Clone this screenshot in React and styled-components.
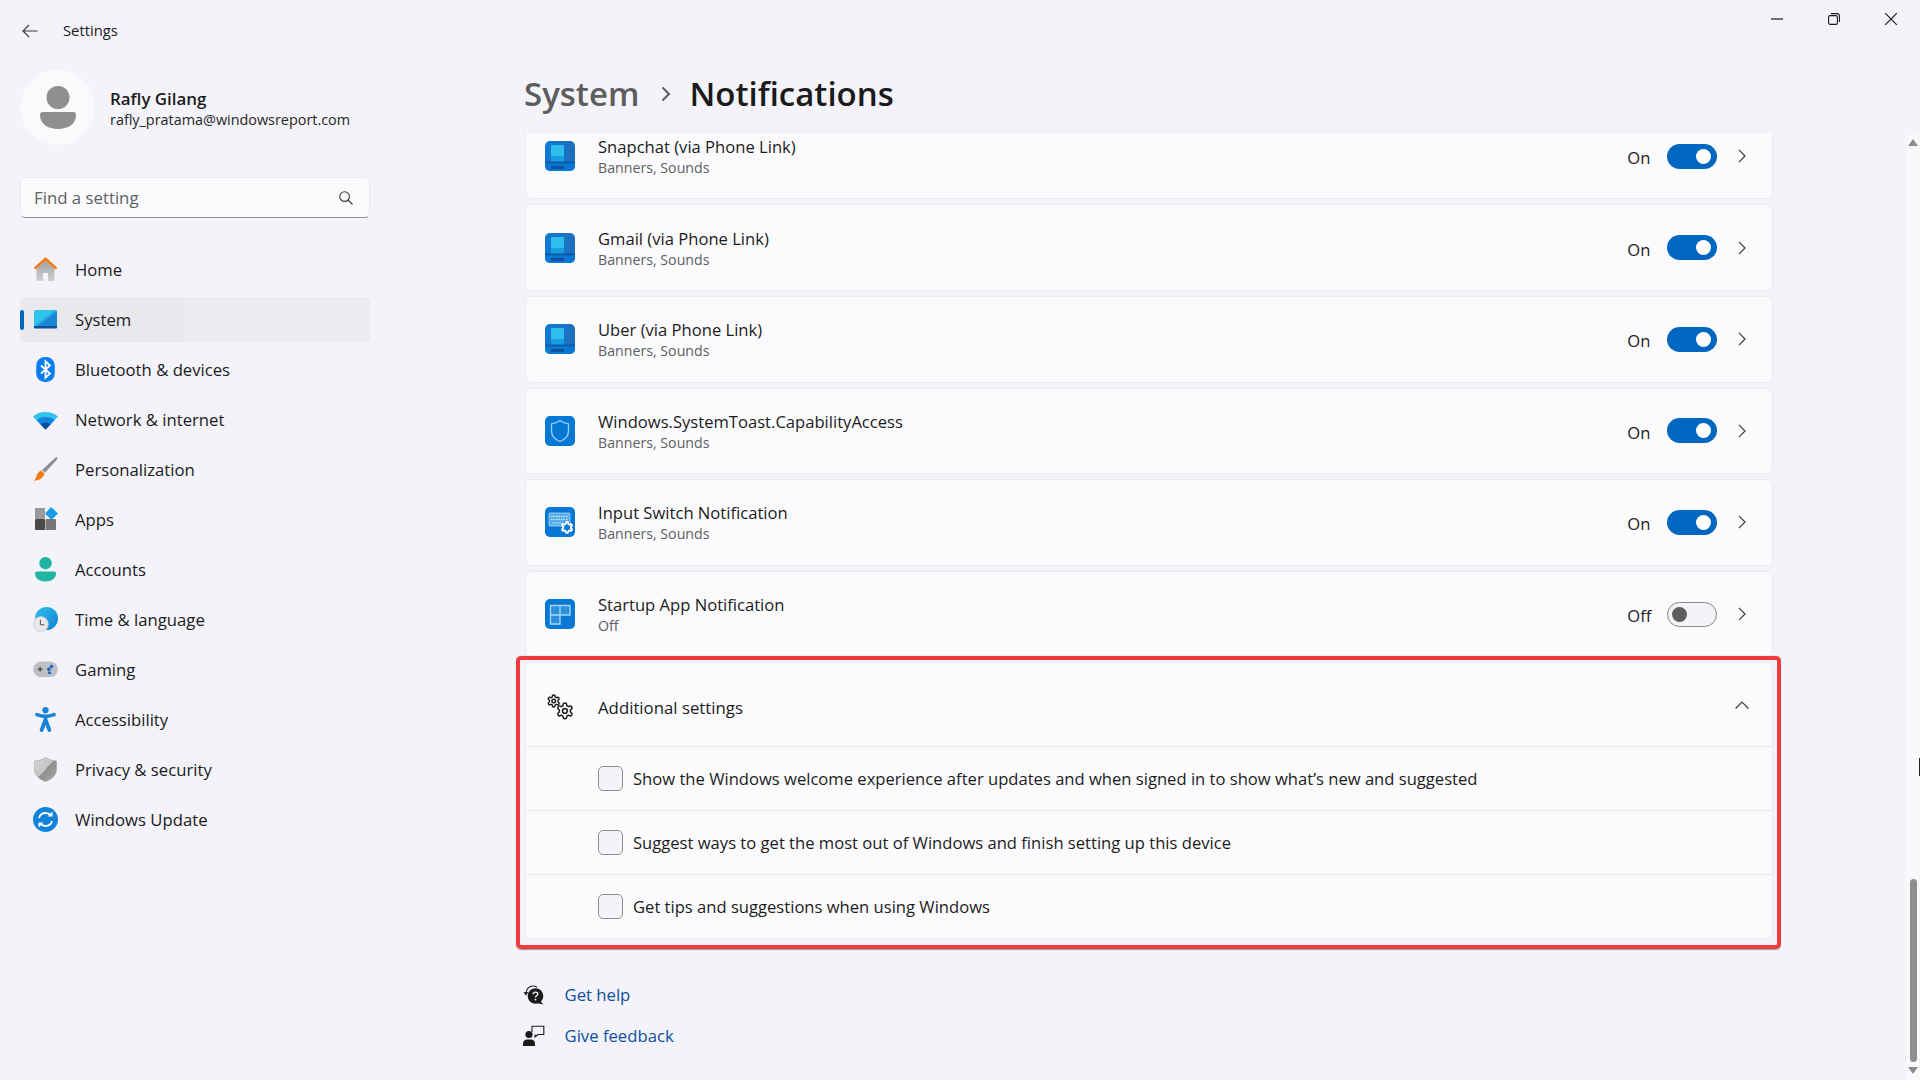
import React from "react";
import styled, { createGlobalStyle } from "styled-components";

const Global = createGlobalStyle`
    html, body {
        margin: 0;
        padding: 0;
        background: #f3f3f9;
    }
    * {
        box-sizing: border-box;
    }
`;

const Page = styled.div`
    width: 1920px;
    height: 1080px;
    overflow: hidden;
    position: relative;
    display: flex;
    flex-direction: column;
    background: #f3f3f9;
    color: #1b1b1b;
    font-family: "Open Sans", "Noto Sans", sans-serif;
    font-size: 16.6px;
`;

const TitleBar = styled.div`
    height: 62px;
    flex: none;
    display: flex;
    align-items: center;
    padding-left: 22px;
`;

const TitleText = styled.div`
    margin-left: 25px;
    padding-bottom: 2px;
    font-size: 14.8px;
`;

const WindowButtons = styled.div`
    margin-left: auto;
    display: flex;
    align-items: flex-start;
    align-self: flex-start;
    padding-top: 13px;
    padding-right: 23px;
    gap: 45px;
`;

const Body = styled.div`
    flex: 1;
    display: flex;
    min-height: 0;
`;

const Sidebar = styled.div`
    width: 505px;
    flex: none;
    padding-left: 20px;
    padding-top: 8px;
`;

const Profile = styled.div`
    display: flex;
    align-items: center;
    gap: 15px;
    height: 75px;
`;

const Avatar = styled.div`
    width: 75px;
    height: 75px;
    border-radius: 50%;
    background: #fafafd;
    display: flex;
    align-items: center;
    justify-content: center;
`;

const ProfileName = styled.div`
    font-weight: 600;
    font-size: 16.9px;
    line-height: 22px;
    margin-top: 2px;
`;

const ProfileMail = styled.div`
    font-size: 14.4px;
    line-height: 20px;
    color: #262626;
`;

const SearchBox = styled.div`
    margin-top: 32px;
    width: 350px;
    height: 41px;
    border-radius: 5px;
    background: #fbfbfe;
    border: 1px solid #ebebf0;
    border-bottom: 1px solid #8d8d8d;
    display: flex;
    align-items: center;
    justify-content: space-between;
    padding: 0 16px 0 13px;
    color: #606060;
    font-size: 16.8px;
`;

const Nav = styled.div`
    margin-top: 29px;
    width: 350px;
    display: flex;
    flex-direction: column;
    gap: 5px;
    font-size: 16.7px;
`;

const NavItem = styled.div`
    height: 45px;
    border-radius: 5px;
    display: flex;
    align-items: center;
    gap: 17px;
    padding-left: 13px;
    position: relative;
    background: ${(p) => (p.$active ? "linear-gradient(90deg, #e8e8ed 45%, #ebebf0 48%)" : "transparent")};
    &::before {
        content: "";
        display: ${(p) => (p.$active ? "block" : "none")};
        position: absolute;
        left: 0;
        top: 13px;
        width: 4px;
        height: 20px;
        border-radius: 2px;
        background: #0067c0;
    }
`;

const NavIcon = styled.svg`
    width: 25px;
    height: 25px;
    flex: none;
`;

const Main = styled.div`
    width: 1288px;
    flex: none;
    display: flex;
    flex-direction: column;
    min-height: 0;
`;

const Breadcrumb = styled.div`
    height: 71px;
    flex: none;
    padding-left: 19px;
    padding-bottom: 8px;
    display: flex;
    align-items: center;
    font-size: 33px;
    font-weight: 600;
`;

const Crumb = styled.span`
    color: ${(p) => (p.$muted ? "#5d5d5d" : "#1b1b1b")};
`;

const CrumbArrow = styled.svg`
    width: 10px;
    height: 16px;
    margin: 0 18px 0 22px;
`;

const Scroller = styled.div`
    flex: 1;
    min-height: 0;
    overflow: hidden;
    padding: 0 19.7px 0 19.5px;
`;

const Stack = styled.div`
    margin-top: -20.2px;
    display: flex;
    flex-direction: column;
    gap: 5px;
`;

const Card = styled.div`
    height: 86.6px;
    background: #fbfbfe;
    border: 1px solid #ebebf0;
    border-radius: 6px;
    display: flex;
    align-items: center;
    padding: 0 26px 0 19.5px;
`;

const AppIcon = styled.svg`
    width: 30px;
    height: 30px;
    flex: none;
`;

const CardText = styled.div`
    margin-left: 23px;
    flex: 1;
`;

const CardTitle = styled.div`
    line-height: 24px;
`;

const CardSub = styled.div`
    font-size: 14.2px;
    line-height: 18px;
    color: #5f5f5f;
`;

const StateLabel = styled.div`
    width: 40px;
    padding-top: 3px;
`;

const Toggle = styled.div`
    width: 50px;
    height: 25px;
    border-radius: 13px;
    position: relative;
    background: ${(p) => (p.$on ? "#0067c0" : "#f3f3f7")};
    border: ${(p) => (p.$on ? "none" : "1.5px solid #8a8a8a")};
    &::after {
        content: "";
        position: absolute;
        top: 50%;
        width: 15px;
        height: 15px;
        margin-top: -7.5px;
        border-radius: 50%;
        background: ${(p) => (p.$on ? "#ffffff" : "#5d5d5d")};
        ${(p) => (p.$on ? "right: 6.5px;" : "left: 3.5px;")}
    }
`;

const Chevron = styled.svg`
    width: 8px;
    height: 14px;
    margin-left: 21px;
    flex: none;
`;

const Expander = styled.div`
    position: relative;
    background: #fbfbfe;
    border: 1px solid #ebebf0;
    border-radius: 6px;
    &::after {
        content: "";
        position: absolute;
        inset: -7px -8.5px -11px -9.5px;
        border: 4.5px solid #ef3b40;
        border-radius: 5px;
        box-shadow: 0 0.5px 1px rgba(60, 60, 60, 0.5);
        pointer-events: none;
    }
`;

const ExpanderHead = styled.div`
    height: 84px;
    border-bottom: 1px solid #e8e8ec;
    display: flex;
    align-items: center;
    padding: 0 23px 0 19.5px;
`;

const HeadGroup = styled.div`
    display: flex;
    align-items: center;
    flex: 1;
    padding-top: 5px;
`;

const HeadLabel = styled.div`
    margin-left: 23px;
    font-size: 16.8px;
`;

const CheckRow = styled.div`
    height: 64px;
    display: flex;
    align-items: center;
    gap: 10.5px;
    padding-left: 72.5px;
    padding-bottom: 1px;
    border-bottom: 1px solid #e8e8ec;
    &:last-child {
        height: 63px;
        border-bottom: none;
    }
`;

const CheckBox = styled.div`
    width: 24.5px;
    height: 24.5px;
    border-radius: 5px;
    border: 1.5px solid #8e8e8e;
    background: #f4f4f8;
`;

const Links = styled.div`
    margin-top: 40.6px;
    margin-left: -2px;
    display: flex;
    flex-direction: column;
    gap: 11px;
`;

const LinkRow = styled.div`
    height: 30px;
    display: flex;
    align-items: center;
    gap: 20px;
    color: #0f4f9e;
    font-size: 16.7px;
`;

const ScrollTrack = styled.div`
    margin-top: 71px;
    margin-left: auto;
    width: 14px;
    background: #f9f9fc;
    border-radius: 7px 7px 0 0;
    display: flex;
    flex-direction: column;
    align-items: center;
    padding: 6px 0;
`;

const ScrollArrow = styled.div`
    width: 0;
    height: 0;
    border-left: 5.5px solid transparent;
    border-right: 5.5px solid transparent;
    ${(p) => (p.$down ? "border-top: 7px solid #8a8a8a;" : "border-bottom: 7px solid #8a8a8a;")}
`;

const ScrollThumb = styled.div`
    margin-top: auto;
    margin-bottom: 5px;
    width: 7px;
    height: 183px;
    border-radius: 4px;
    background: #8f8f8f;
`;

const CursorEdge = styled.div`
    position: absolute;
    right: 0;
    top: 758px;
    width: 1px;
    height: 18px;
    background: #222222;
`;

const gearPath =
    "M12.22 2h-.44a2 2 0 0 0-2 2v.18a2 2 0 0 1-1 1.73l-.43.25a2 2 0 0 1-2 0l-.15-.08a2 2 0 0 0-2.73.73l-.22.38a2 2 0 0 0 .73 2.73l.15.1a2 2 0 0 1 1 1.72v.51a2 2 0 0 1-1 1.74l-.15.09a2 2 0 0 0-.73 2.73l.22.38a2 2 0 0 0 2.73.73l.15-.08a2 2 0 0 1 2 0l.43.25a2 2 0 0 1 1 1.73V20a2 2 0 0 0 2 2h.44a2 2 0 0 0 2-2v-.18a2 2 0 0 1 1-1.73l.43-.25a2 2 0 0 1 2 0l.15.08a2 2 0 0 0 2.73-.73l.22-.39a2 2 0 0 0-.73-2.73l-.15-.08a2 2 0 0 1-1-1.74v-.5a2 2 0 0 1 1-1.74l.15-.09a2 2 0 0 0 .73-2.73l-.22-.38a2 2 0 0 0-2.73-.73l-.15.08a2 2 0 0 1-2 0l-.43-.25a2 2 0 0 1-1-1.73V4a2 2 0 0 0-2-2z";

const BackIcon = () => (
    <svg width="16" height="14" viewBox="0 0 16 14" fill="none" stroke="#3c3c3c" strokeWidth="1.2">
        <path d="M15.5 7H1M7 1 1 7l6 6" />
    </svg>
);

const MinIcon = () => (
    <svg width="12" height="12" viewBox="0 0 12 12" fill="none" stroke="#1b1b1b" strokeWidth="1.2">
        <path d="M0 6h12" />
    </svg>
);

const RestoreIcon = () => (
    <svg width="12" height="12" viewBox="0 0 12 12" fill="none" stroke="#1b1b1b" strokeWidth="1.1">
        <rect x="0.6" y="2.6" width="8.8" height="8.8" rx="1.5" />
        <path d="M3 .6h6.2a2.2 2.2 0 0 1 2.2 2.2V9" />
    </svg>
);

const CloseIcon = () => (
    <svg width="12" height="12" viewBox="0 0 12 12" fill="none" stroke="#1b1b1b" strokeWidth="1.2">
        <path d="M0 0l12 12M12 0 0 12" />
    </svg>
);

const SearchIcon = () => (
    <svg width="14" height="14" viewBox="0 0 14 14" fill="none" stroke="#3c3c3c" strokeWidth="1.1">
        <circle cx="5.6" cy="5.6" r="4.8" />
        <path d="M9 9l4.5 4.5" />
    </svg>
);

const RowChevron = () => (
    <Chevron viewBox="0 0 8 14" fill="none" stroke="#3c3c3c" strokeWidth="1.2">
        <path d="M1 .8 7 7l-6 6.2" />
    </Chevron>
);

const HomeIcon = () => (
    <NavIcon viewBox="0 0 25 25">
        <defs>
            <linearGradient id="homeG" x1="0" y1="0" x2="0" y2="1">
                <stop offset="0" stopColor="#9e9e9e" />
                <stop offset="1" stopColor="#d2d2d2" />
            </linearGradient>
        </defs>
        <path d="M12.5 3.5 3.5 11.5V23a1 1 0 0 0 1 1h5.5v-8h5v8h5.5a1 1 0 0 0 1-1V11.5z" fill="url(#homeG)" />
        <path d="M1.6 11.6 12.5 1.8l10.9 9.8" fill="none" stroke="#f27b12" strokeWidth="2.6" strokeLinejoin="round" />
    </NavIcon>
);

const SystemIcon = () => (
    <NavIcon viewBox="0 0 25 25">
        <defs>
            <linearGradient id="sysG" x1="1" y1="1" x2="0" y2="0">
                <stop offset="0.42" stopColor="#1c86d6" />
                <stop offset="0.56" stopColor="#2fc3ea" />
            </linearGradient>
        </defs>
        <rect x="1" y="3" width="23" height="17" rx="1.5" fill="url(#sysG)" />
        <path d="M1 19h23v1.5a1 1 0 0 1-1 1H2a1 1 0 0 1-1-1z" fill="#0b4f9e" />
    </NavIcon>
);

const BluetoothIcon = () => (
    <NavIcon viewBox="0 0 25 25">
        <rect x="3.2" y="0" width="18.6" height="25" rx="8.5" fill="#0a7ef0" />
        <path d="M8 8.5l9 8-4.5 4.2V4.3l4.5 4.2-9 8" fill="none" stroke="#fff" strokeWidth="1.8" />
    </NavIcon>
);

const WifiIcon = () => (
    <NavIcon viewBox="0 0 25 25">
        <path d="M0 9.4C3.6 6.4 8 5 12.5 5S21.4 6.4 25 9.4l-12.5 13z" fill="#2fc3ea" />
        <path d="M3.6 13.2C6 11 9.2 9.9 12.5 9.9s6.5 1.1 8.9 3.3L12.5 22.4z" fill="#1183dc" />
        <path d="M7.5 17.2c1.4-1.100 3.200-1.800 5-1.800s3.600.7 5 1.800l-5 5.200z" fill="#0b4a96" />
    </NavIcon>
);

const BrushIcon = () => (
    <NavIcon viewBox="0 0 25 25">
        <path d="M24 .6c.6.6.5 1.300 0 2L12 15.800 9 13 22 .9c.7-.6 1.400-.8 2-.3z" fill="#8f8f8f" />
        <path d="M8.200 13.600 11.400 16.600c-1 3.800-4.400 7-10.700 7.400 2.300-1.600 2.200-3.600 3-5.700.8-2 2.400-3.700 4.500-4.700z" fill="#f27b12" />
    </NavIcon>
);

const AppsIcon = () => (
    <NavIcon viewBox="0 0 25 25">
        <rect x="2" y="1" width="10" height="11" fill="#9a9a9a" />
        <rect x="2" y="12" width="10" height="11" rx="1" fill="#4a4a4a" />
        <rect x="12.5" y="12" width="10.5" height="11" rx="1" fill="#757575" />
        <path d="M18 0l7 6.500-6.500 6.500-6.500-6.500z" fill="#1a9be8" />
    </NavIcon>
);

const AccountsIcon = () => (
    <NavIcon viewBox="0 0 25 25">
        <circle cx="12.5" cy="6.2" r="6.2" fill="#1fb5a0" />
        <path d="M2 16.500a2 2 0 0 1 2-2h17a2 2 0 0 1 2 2c0 5-4.800 8-10.500 8S2 21.500 2 16.500z" fill="#1fb5a0" />
    </NavIcon>
);

const TimeIcon = () => (
    <NavIcon viewBox="0 0 25 25">
        <defs>
            <linearGradient id="globeG" x1="0" y1="0" x2="1" y2="1">
                <stop offset="0" stopColor="#2fc3ea" />
                <stop offset="1" stopColor="#0f7fd6" />
            </linearGradient>
        </defs>
        <circle cx="13.5" cy="11.5" r="11.5" fill="url(#globeG)" />
        <circle cx="7.8" cy="17.2" r="7.6" fill="#e8e8ea" stroke="#c4c4c6" strokeWidth="0.6" />
        <path d="M7.400 12.800v5h3.800" fill="none" stroke="#505050" strokeWidth="1" />
    </NavIcon>
);

const GamingIcon = () => (
    <NavIcon viewBox="0 0 25 25">
        <rect x="0.2" y="4.5" width="24.6" height="15.5" rx="7.5" fill="#c0c0c3" />
        <path d="M4.600 12.200h5M7.100 9.700v5" stroke="#555" strokeWidth="1.5" />
        <circle cx="18.5" cy="9.5" r="1.7" fill="#1067c4" />
        <circle cx="15.8" cy="12.3" r="1.7" fill="#1067c4" />
        <circle cx="16.5" cy="15.8" r="1.5" fill="#1067c4" />
    </NavIcon>
);

const AccessIcon = () => (
    <NavIcon viewBox="0 0 25 25">
        <circle cx="12.5" cy="3.2" r="3.1" fill="#1583d8" />
        <path d="M4 7.600c2.800 1.100 5.500 1.700 8.500 1.700s5.700-.6 8.500-1.700M12.500 9.500v3.500M12.500 12.500 8.600 23M12.500 12.500l3.900 10.500" fill="none" stroke="#1583d8" strokeWidth="3.7" strokeLinecap="round" />
    </NavIcon>
);

const PrivacyIcon = () => (
    <NavIcon viewBox="0 0 25 25">
        <defs>
            <linearGradient id="shieldG" x1="0" y1="0" x2="1" y2="1">
                <stop offset="0" stopColor="#d6d6d6" />
                <stop offset="0.5" stopColor="#c4c4c4" />
                <stop offset="0.5" stopColor="#8e8e8e" />
                <stop offset="1" stopColor="#a9a9a9" />
            </linearGradient>
        </defs>
        <path d="M12.500.5C9.500 2.400 5.800 3.600 1.500 4v8.500c0 5.500 4.500 9.700 11 12 6.500-2.300 11-6.500 11-12V4c-4.300-.4-8-1.600-11-3.500z" fill="url(#shieldG)" stroke="#9a9a9a" strokeWidth="0.5" />
    </NavIcon>
);

const UpdateIcon = () => (
    <NavIcon viewBox="0 0 25 25">
        <circle cx="12.5" cy="12.5" r="12.5" fill="#1183dc" />
        <path d="M6 11c.8-3 3.400-5 6.500-5 2.400 0 4 1 5.500 2.500M19 14c-.8 3-3.400 5-6.500 5-2.400 0-4-1-5.500-2.500" fill="none" stroke="#fff" strokeWidth="1.8" />
        <path d="M19.500 4.500v5h-5zM5.500 20.500v-5h5z" fill="#fff" />
    </NavIcon>
);

const PhoneIcon = ({ id }) => (
    <AppIcon viewBox="0 0 30 30">
        <defs>
            <linearGradient id={id} x1="0" y1="0" x2="1" y2="0">
                <stop offset="0" stopColor="#0f7ad2" />
                <stop offset="1" stopColor="#1f6fbd" />
            </linearGradient>
        </defs>
        <rect width="30" height="30" rx="5" fill={`url(#${id})`} />
        <path d="M0 21h30v4a5 5 0 0 1-5 5H5a5 5 0 0 1-5-5z" fill="#0678d4" />
        <rect x="6" y="4" width="13" height="11" rx="1" fill="#30bfec" />
        <rect x="6" y="15" width="13" height="6" fill="#189ce2" />
        <rect y="20.5" width="30" height="1.8" fill="#0b5aa6" />
        <rect x="6" y="25" width="13" height="3" fill="#0f4f9e" />
    </AppIcon>
);

const ShieldAppIcon = () => (
    <AppIcon viewBox="0 0 30 30">
        <rect width="30" height="30" rx="5" fill="#0678d4" />
        <path d="M15 4.500C12.500 6.500 9.500 7.500 6.500 7.800v7.200c0 5 3.500 8.500 8.500 10.500 5-2 8.500-5.500 8.500-10.500V7.800c-3-.3-6-1.300-8.500-3.300z" fill="none" stroke="#93d0f5" strokeWidth="1.3" />
    </AppIcon>
);

const InputAppIcon = () => (
    <AppIcon viewBox="0 0 30 30">
        <rect width="30" height="30" rx="5" fill="#0678d4" />
        <rect x="4" y="6" width="21" height="13" rx="1" fill="#5aaee8" stroke="#a6d6f6" strokeWidth="0.8" />
        <path d="M6 9.500h17M6 12.500h17M8 16h10" stroke="#d2ecfb" strokeWidth="1.1" strokeDasharray="1.500 1" />
        <circle cx="22" cy="20.5" r="6" fill="#0678d4" />
        <svg x="15.5" y="14" width="13" height="13" viewBox="0 0 24 24" fill="#0678d4" stroke="#fff" strokeWidth="3.6">
            <path d={gearPath} />
        </svg>
    </AppIcon>
);

const StartupIcon = () => (
    <AppIcon viewBox="0 0 30 30">
        <rect width="30" height="30" rx="5" fill="#0678d4" />
        <path d="M5.500 6.500h19.500v9.500H15v9H5.500zM15 6.500V16M5.500 16H15" fill="#2b8fdc" stroke="#a9d8f7" strokeWidth="1.3" />
    </AppIcon>
);

const Gear = ({ x, y, size, stroke }) => (
    <svg x={x} y={y} width={size} height={size} viewBox="0 0 24 24" fill="none" stroke="#1b1b1b" strokeWidth={stroke}>
        <path d={gearPath} />
        <circle cx="12" cy="12" r="3" />
    </svg>
);

const GearsIcon = () => (
    <AppIcon viewBox="0 0 30 30">
        <Gear x={1.5} y={1.8} size={14.4} stroke={2.4} />
        <Gear x={10.4} y={9.4} size={19} stroke={1.9} />
    </AppIcon>
);

const HelpIcon = () => (
    <svg width="22" height="22" viewBox="0 0 22 22">
        <path d="M3 9.500C3 5 6 2 10 2c1.500 0 2.800.4 3.900 1.200" fill="none" stroke="#1b1b1b" strokeWidth="1.1" />
        <path d="M0.500 8 3 11.500 5.500 8.300z" fill="#1b1b1b" />
        <circle cx="12.5" cy="12" r="7.8" fill="#1b1b1b" />
        <path d="M17 17l3.500 3.500-6-1.200z" fill="#1b1b1b" />
        <path d="M10.200 10.200c0-1.300 1-2 2.300-2s2.300.8 2.300 1.900c0 1.700-2.300 1.500-2.300 3.300" fill="none" stroke="#fff" strokeWidth="1.3" />
        <circle cx="12.5" cy="15.6" r="0.9" fill="#fff" />
    </svg>
);

const FeedbackIcon = () => (
    <svg width="22" height="22" viewBox="0 0 22 22">
        <circle cx="6" cy="9.5" r="3.6" fill="#1b1b1b" />
        <path d="M0 21v-2.500c0-2.500 2-4 4-4h4c2 0 4 1.500 4 4V21z" fill="#1b1b1b" />
        <path d="M9 7V1.200h11.800v8.300h-6M14.800 9.500 12 12v-2.500" fill="none" stroke="#1b1b1b" strokeWidth="1.1" />
    </svg>
);

const navItems = [
    { label: "Home", icon: HomeIcon },
    { label: "System", icon: SystemIcon, active: true },
    { label: "Bluetooth & devices", icon: BluetoothIcon },
    { label: "Network & internet", icon: WifiIcon },
    { label: "Personalization", icon: BrushIcon },
    { label: "Apps", icon: AppsIcon },
    { label: "Accounts", icon: AccountsIcon },
    { label: "Time & language", icon: TimeIcon },
    { label: "Gaming", icon: GamingIcon },
    { label: "Accessibility", icon: AccessIcon },
    { label: "Privacy & security", icon: PrivacyIcon },
    { label: "Windows Update", icon: UpdateIcon }
];

const apps = [
    { name: "Snapchat (via Phone Link)", sub: "Banners, Sounds", on: true, icon: <PhoneIcon id="ph1" /> },
    { name: "Gmail (via Phone Link)", sub: "Banners, Sounds", on: true, icon: <PhoneIcon id="ph2" /> },
    { name: "Uber (via Phone Link)", sub: "Banners, Sounds", on: true, icon: <PhoneIcon id="ph3" /> },
    { name: "Windows.SystemToast.CapabilityAccess", sub: "Banners, Sounds", on: true, icon: <ShieldAppIcon /> },
    { name: "Input Switch Notification", sub: "Banners, Sounds", on: true, icon: <InputAppIcon /> },
    { name: "Startup App Notification", sub: "Off", on: false, icon: <StartupIcon /> }
];

const extras = [
    "Show the Windows welcome experience after updates and when signed in to show what\u2019s new and suggested",
    "Suggest ways to get the most out of Windows and finish setting up this device",
    "Get tips and suggestions when using Windows"
];

export default function App() {
    return (
        <Page>
            <Global />
            <TitleBar>
                <BackIcon />
                <TitleText>Settings</TitleText>
                <WindowButtons>
                    <MinIcon />
                    <RestoreIcon />
                    <CloseIcon />
                </WindowButtons>
            </TitleBar>
            <Body>
                <Sidebar>
                    <Profile>
                        <Avatar>
                            <svg width="36" height="44" viewBox="0 0 36 44" fill="#8f8f8f">
                                <circle cx="18" cy="11.5" r="11.5" />
                                <path d="M0 29a3 3 0 0 1 3-3h30a3 3 0 0 1 3 3c0 9-8 14-18 14S0 38 0 29z" />
                            </svg>
                        </Avatar>
                        <div>
                            <ProfileName>Rafly Gilang</ProfileName>
                            <ProfileMail>rafly_pratama@windowsreport.com</ProfileMail>
                        </div>
                    </Profile>
                    <SearchBox>
                        Find a setting
                        <SearchIcon />
                    </SearchBox>
                    <Nav>
                        {navItems.map(({ label, icon: Icon, active }) => (
                            <NavItem key={label} $active={active}>
                                <Icon />
                                {label}
                            </NavItem>
                        ))}
                    </Nav>
                </Sidebar>
                <Main>
                    <Breadcrumb>
                        <Crumb $muted>System</Crumb>
                        <CrumbArrow viewBox="0 0 10 16" fill="none" stroke="#5d5d5d" strokeWidth="2">
                            <path d="M1.500 1.500 8 8l-6.500 6.500" />
                        </CrumbArrow>
                        <Crumb>Notifications</Crumb>
                    </Breadcrumb>
                    <Scroller>
                        <Stack>
                            {apps.map((app) => (
                                <Card key={app.name}>
                                    {app.icon}
                                    <CardText>
                                        <CardTitle>{app.name}</CardTitle>
                                        <CardSub>{app.sub}</CardSub>
                                    </CardText>
                                    <StateLabel>{app.on ? "On" : "Off"}</StateLabel>
                                    <Toggle $on={app.on} />
                                    <RowChevron />
                                </Card>
                            ))}
                            <Expander>
                                <ExpanderHead>
                                    <HeadGroup>
                                        <GearsIcon />
                                        <HeadLabel>Additional settings</HeadLabel>
                                    </HeadGroup>
                                    <svg width="14" height="8" viewBox="0 0 14 8" fill="none" stroke="#3c3c3c" strokeWidth="1.2">
                                        <path d="M.6 7.500 7 1l6.400 6.500" />
                                    </svg>
                                </ExpanderHead>
                                {extras.map((text) => (
                                    <CheckRow key={text}>
                                        <CheckBox />
                                        {text}
                                    </CheckRow>
                                ))}
                            </Expander>
                        </Stack>
                        <Links>
                            <LinkRow>
                                <HelpIcon />
                                Get help
                            </LinkRow>
                            <LinkRow>
                                <FeedbackIcon />
                                Give feedback
                            </LinkRow>
                        </Links>
                    </Scroller>
                </Main>
                <ScrollTrack>
                    <ScrollArrow />
                    <ScrollThumb />
                    <ScrollArrow $down />
                </ScrollTrack>
            </Body>
            <CursorEdge />
        </Page>
    );
}
